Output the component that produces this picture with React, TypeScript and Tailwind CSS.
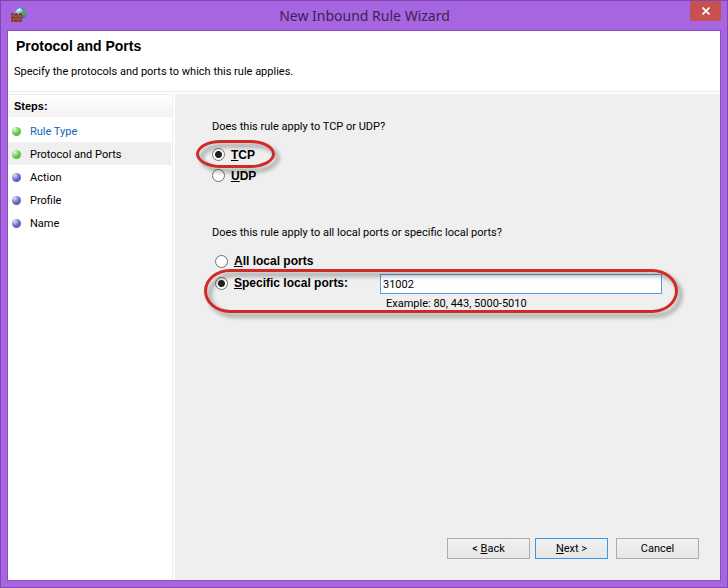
import { useState } from "react";

const steps = [
  { name: "Rule Type", reached: true, link: true },
  { name: "Protocol and Ports", reached: true, current: true },
  { name: "Action" },
  { name: "Profile" },
  { name: "Name" },
];

const ring =
  "pointer-events-none absolute border-[3px] border-[#cf2a25] drop-shadow-[4px_4px_2px_rgba(0,0,0,0.4)]";

const radio =
  "h-[13px] w-[13px] shrink-0 appearance-none rounded-full border border-[#707070] bg-white checked:bg-[radial-gradient(circle,#222_0_3px,#fff_4px)]";

const label = "font-['Liberation_Sans',Arial,sans-serif] text-xs font-bold";

const button =
  "h-[21px] border bg-linear-to-b from-[#f1f1f1] to-[#e6e6e6] text-center leading-[20px]";

function FirewallIcon() {
  return (
    <svg width="17" height="16" viewBox="0 0 17 16" className="shrink-0" aria-hidden="true">
      <circle cx="10.500" cy="6.500" r="5.800" fill="#2f73b8" />
      <path d="M5 5.500C5.500 2.500 8 1 10.500 1L13 3l-2 3.500-3 1.500H5z" fill="#7fd0ee" />
      <path d="M6.500 3.500 9.500 1.200 11 2 9 4.500z" fill="#d9f4fb" />
      <path d="M12 1.500c2.500.8 3.800 2.500 4 4.500l-1.500 3L12 7.500l-.5-2L13 4z" fill="#55b04c" />
      <path d="M1 6h2.500v1H5V6h2.500v1H9V6h3v9H1z" fill="#8a3a2b" />
      <path
        d="M1 9h11M1 12h11M3.500 7v2M8.500 7v2M6 9v3M10 9v3M3.500 12v3M8.500 12v3"
        stroke="#bd7261"
        strokeWidth=".5"
      />
    </svg>
  );
}

function StepDot({ reached }: { reached?: boolean }) {
  return (
    <span
      className={
        "h-[9px] w-[9px] shrink-0 rounded-full " +
        (reached
          ? "bg-[radial-gradient(circle_at_30%_25%,#e4f9de_0,#62cb4c_50%,#4cad38_100%)]"
          : "bg-[radial-gradient(circle_at_30%_25%,#dedef8_0,#6c69c6_50%,#504ca8_100%)]")
      }
    />
  );
}

export default function App() {
  const [protocol, setProtocol] = useState("tcp");
  const [scope, setScope] = useState("specific");
  const [ports, setPorts] = useState("31002");

  return (
    <div className="flex min-h-screen flex-col border border-[#8246b4] bg-[#a865e1] px-1.5 pb-1.5 font-[Roboto,sans-serif] text-[11px] text-black">
      <header className="flex h-[29px] shrink-0 items-start">
        <div className="flex w-8 pt-1.5 pl-[3px]">
          <FirewallIcon />
        </div>
        <h1 className="flex-1 pt-1 text-center font-['Noto_Sans',sans-serif] text-[14px] leading-[22px] text-[#3b2350]">
          New Inbound Rule Wizard
        </h1>
        <button
          aria-label="Close"
          className="flex h-5 w-[31px] items-center justify-center bg-[#c75050] text-white"
        >
          <svg width="8" height="8" viewBox="0 0 8 8" aria-hidden="true">
            <path d="M.5.5l7 7M7.500.5l-7 7" stroke="currentColor" strokeWidth="1.700" />
          </svg>
        </button>
      </header>

      <main className="flex flex-1 flex-col border border-[#8b4fbf] bg-white">
        <div className="h-[61px] shrink-0 border-b border-[#ededed] px-1.5 pt-[7px]">
          <h2 className="pl-0.5 font-['Liberation_Sans',Arial,sans-serif] text-[14px] leading-4 font-bold">
            Protocol and Ports
          </h2>
          <p className="pt-[10px] leading-4">
            Specify the protocols and ports to which this rule applies.
          </p>
        </div>

        <div className="flex flex-1 gap-0.5 pt-0.5">
          <nav className="w-[165px] shrink-0 border-r border-[#ececec]">
            <h3 className="h-[23px] border-t border-[#f0f0f0] bg-linear-to-b from-white to-[#f2f2f2] pl-1.5 font-['Liberation_Sans',Arial,sans-serif] leading-[22px] font-bold">
              Steps:
            </h3>
            <ol className="pt-0.5">
              {steps.map((step) => (
                <li
                  key={step.name}
                  className={
                    "mr-px flex h-[23px] items-center gap-[9px] pt-px pl-1 " +
                    (step.current ? "bg-[#efefef]" : "")
                  }
                >
                  <StepDot reached={step.reached} />
                  {step.link ? (
                    <a href="#rule-type" className="pt-0.5 leading-4 text-[#0a64bd]">
                      {step.name}
                    </a>
                  ) : (
                    <span className="pt-0.5 leading-4">{step.name}</span>
                  )}
                </li>
              ))}
            </ol>
          </nav>

          <form className="flex flex-1 flex-col bg-[#efefef] pt-[25px]" onSubmit={(e) => e.preventDefault()}>
            <fieldset className="pl-[37px]">
              <legend className="leading-4">Does this rule apply to TCP or UDP?</legend>
              <div className="pt-[9px]">
                <div className="relative flex h-[21px] items-center gap-1.5">
                  <input id="tcp" type="radio" name="protocol" className={radio} checked={protocol === "tcp"} onChange={() => setProtocol("tcp")} />
                  <label htmlFor="tcp" className={label}>
                    <u>T</u>CP
                  </label>
                  <span className={ring + " -top-1 -left-4 h-7 w-[79px] rounded-[25px/14px]"} />
                </div>
                <div className="flex h-[21px] items-center gap-1.5">
                  <input id="udp" type="radio" name="protocol" className={radio} checked={protocol === "udp"} onChange={() => setProtocol("udp")} />
                  <label htmlFor="udp" className={label}>
                    <u>U</u>DP
                  </label>
                </div>
              </div>
            </fieldset>

            <fieldset className="pt-[39px] pl-[37px]">
              <legend className="contents">
                <span className="block leading-4">
                  Does this rule apply to all local ports or specific local ports?
                </span>
              </legend>
              <div className="pt-[9px] pr-[58px] pl-[3px]">
                <div className="flex h-[22px] items-center gap-1.5">
                  <input id="all" type="radio" name="scope" className={radio} checked={scope === "all"} onChange={() => setScope("all")} />
                  <label htmlFor="all" className={label}>
                    <u>A</u>ll local ports
                  </label>
                </div>
                <div className="relative flex items-start">
                  <div className="flex h-[22px] w-[165px] shrink-0 items-center gap-1.5">
                    <input id="specific" type="radio" name="scope" className={radio} checked={scope === "specific"} onChange={() => setScope("specific")} />
                    <label htmlFor="specific" className={label}>
                      <u>S</u>pecific local ports:
                    </label>
                  </div>
                  <div className="flex-1 pt-0.5">
                    <input
                      aria-label="Specific local ports"
                      aria-describedby="ports-example"
                      className="block h-5 w-full border border-[#569de5] bg-white px-0.5 text-[11px] outline-none"
                      value={ports}
                      onChange={(e) => setPorts(e.target.value)}
                    />
                    <p id="ports-example" className="pl-1.5 leading-5">
                      Example: 80, 443, 5000-5010
                    </p>
                  </div>
                  <span className={ring + " -top-[3px] -right-4 -left-[11px] h-11 rounded-[26px/22px]"} />
                </div>
              </div>
            </fieldset>

            <div className="mt-auto flex justify-end gap-2 pr-[21px] pb-[21px]">
              <div className="flex gap-[5px]">
                <button type="button" className={button + " w-[83px] border-[#acacac]"}>
                  &lt; <u>B</u>ack
                </button>
                <button type="submit" className={button + " w-[73px] border-[#3c97ea]"}>
                  <u>N</u>ext &gt;
                </button>
              </div>
              <button type="button" className={button + " w-[83px] border-[#acacac]"}>
                Cancel
              </button>
            </div>
          </form>
        </div>
      </main>
    </div>
  );
}
